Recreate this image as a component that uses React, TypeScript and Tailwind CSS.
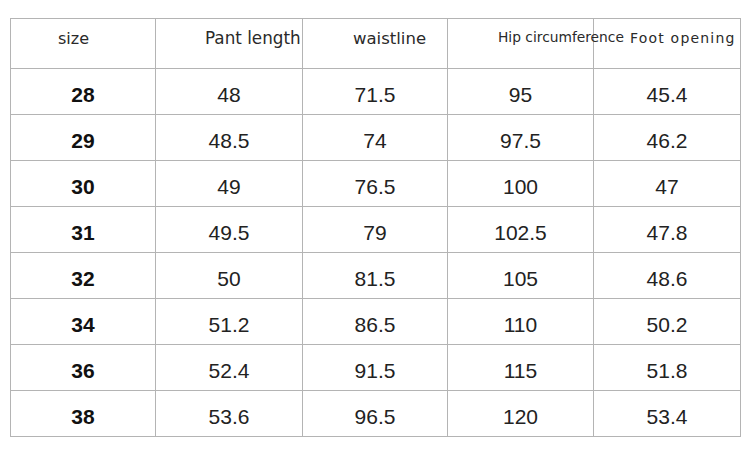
import React from "react";

const rows = [
  ["28", "48", "71.5", "95", "45.4"],
  ["29", "48.5", "74", "97.5", "46.2"],
  ["30", "49", "76.5", "100", "47"],
  ["31", "49.5", "79", "102.5", "47.8"],
  ["32", "50", "81.5", "105", "48.6"],
  ["34", "51.2", "86.5", "110", "50.2"],
  ["36", "52.4", "91.5", "115", "51.8"],
  ["38", "53.6", "96.5", "120", "53.4"],
];

const widths = ["w-[145px]", "w-[147px]", "w-[145px]", "w-[146px]", "w-[147px]"];

export default function App() {
  return (
    <div className="w-[749px] h-[462px] bg-white pt-[18px] pl-[10px]">
      <table className="border-collapse table-fixed w-[730px]">
        <colgroup>
          {widths.map((w, i) => (
            <col key={i} className={w} />
          ))}
        </colgroup>
        <thead>
          <tr className="h-[50px]">
            <th className="border border-[#b4b4b4] p-0 text-left font-normal align-top">
              <span className="block pl-[47px] pt-[12px] whitespace-nowrap text-[16px] leading-none text-[#2a2a2a] [font-family:'DejaVu_Sans',sans-serif]">
                size
              </span>
            </th>
            <th className="border border-[#b4b4b4] p-0 text-left font-normal align-top">
              <span className="block pl-[49px] pt-[11px] whitespace-nowrap text-[16.8px] leading-none text-[#2a2a2a] [font-family:'DejaVu_Sans',sans-serif]">
                Pant length
              </span>
            </th>
            <th className="border border-[#b4b4b4] p-0 text-left font-normal align-top">
              <span className="block pl-[50px] pt-[12px] whitespace-nowrap text-[16.5px] leading-none text-[#2a2a2a] [font-family:'DejaVu_Sans',sans-serif]">
                waistline
              </span>
            </th>
            <th className="border border-[#b4b4b4] p-0 text-left font-normal align-top">
              <span className="block pl-[50px] pt-[12px] whitespace-nowrap text-[13.8px] leading-none text-[#2a2a2a] [font-family:'DejaVu_Sans',sans-serif]">
                Hip circumference
              </span>
            </th>
            <th className="border border-[#b4b4b4] p-0 text-left font-normal align-top">
              <span className="block pl-[36px] pt-[12px] whitespace-nowrap text-[14px] tracking-[1.2px] leading-none text-[#2a2a2a] [font-family:'DejaVu_Sans',sans-serif]">
                Foot opening
              </span>
            </th>
          </tr>
        </thead>
        <tbody>
          {rows.map((r, i) => (
            <tr key={i} className="h-[46px]">
              {r.map((v, j) => (
                <td
                  key={j}
                  className={`border border-[#b4b4b4] p-0 pt-[6px] text-center align-middle text-[21px] leading-none [font-family:'Liberation_Sans',Arial,sans-serif] ${
                    j === 0 ? "font-bold text-[#111]" : "text-[#222]"
                  }`}
                >
                  {v}
                </td>
              ))}
            </tr>
          ))}
        </tbody>
      </table>
    </div>
  );
}
